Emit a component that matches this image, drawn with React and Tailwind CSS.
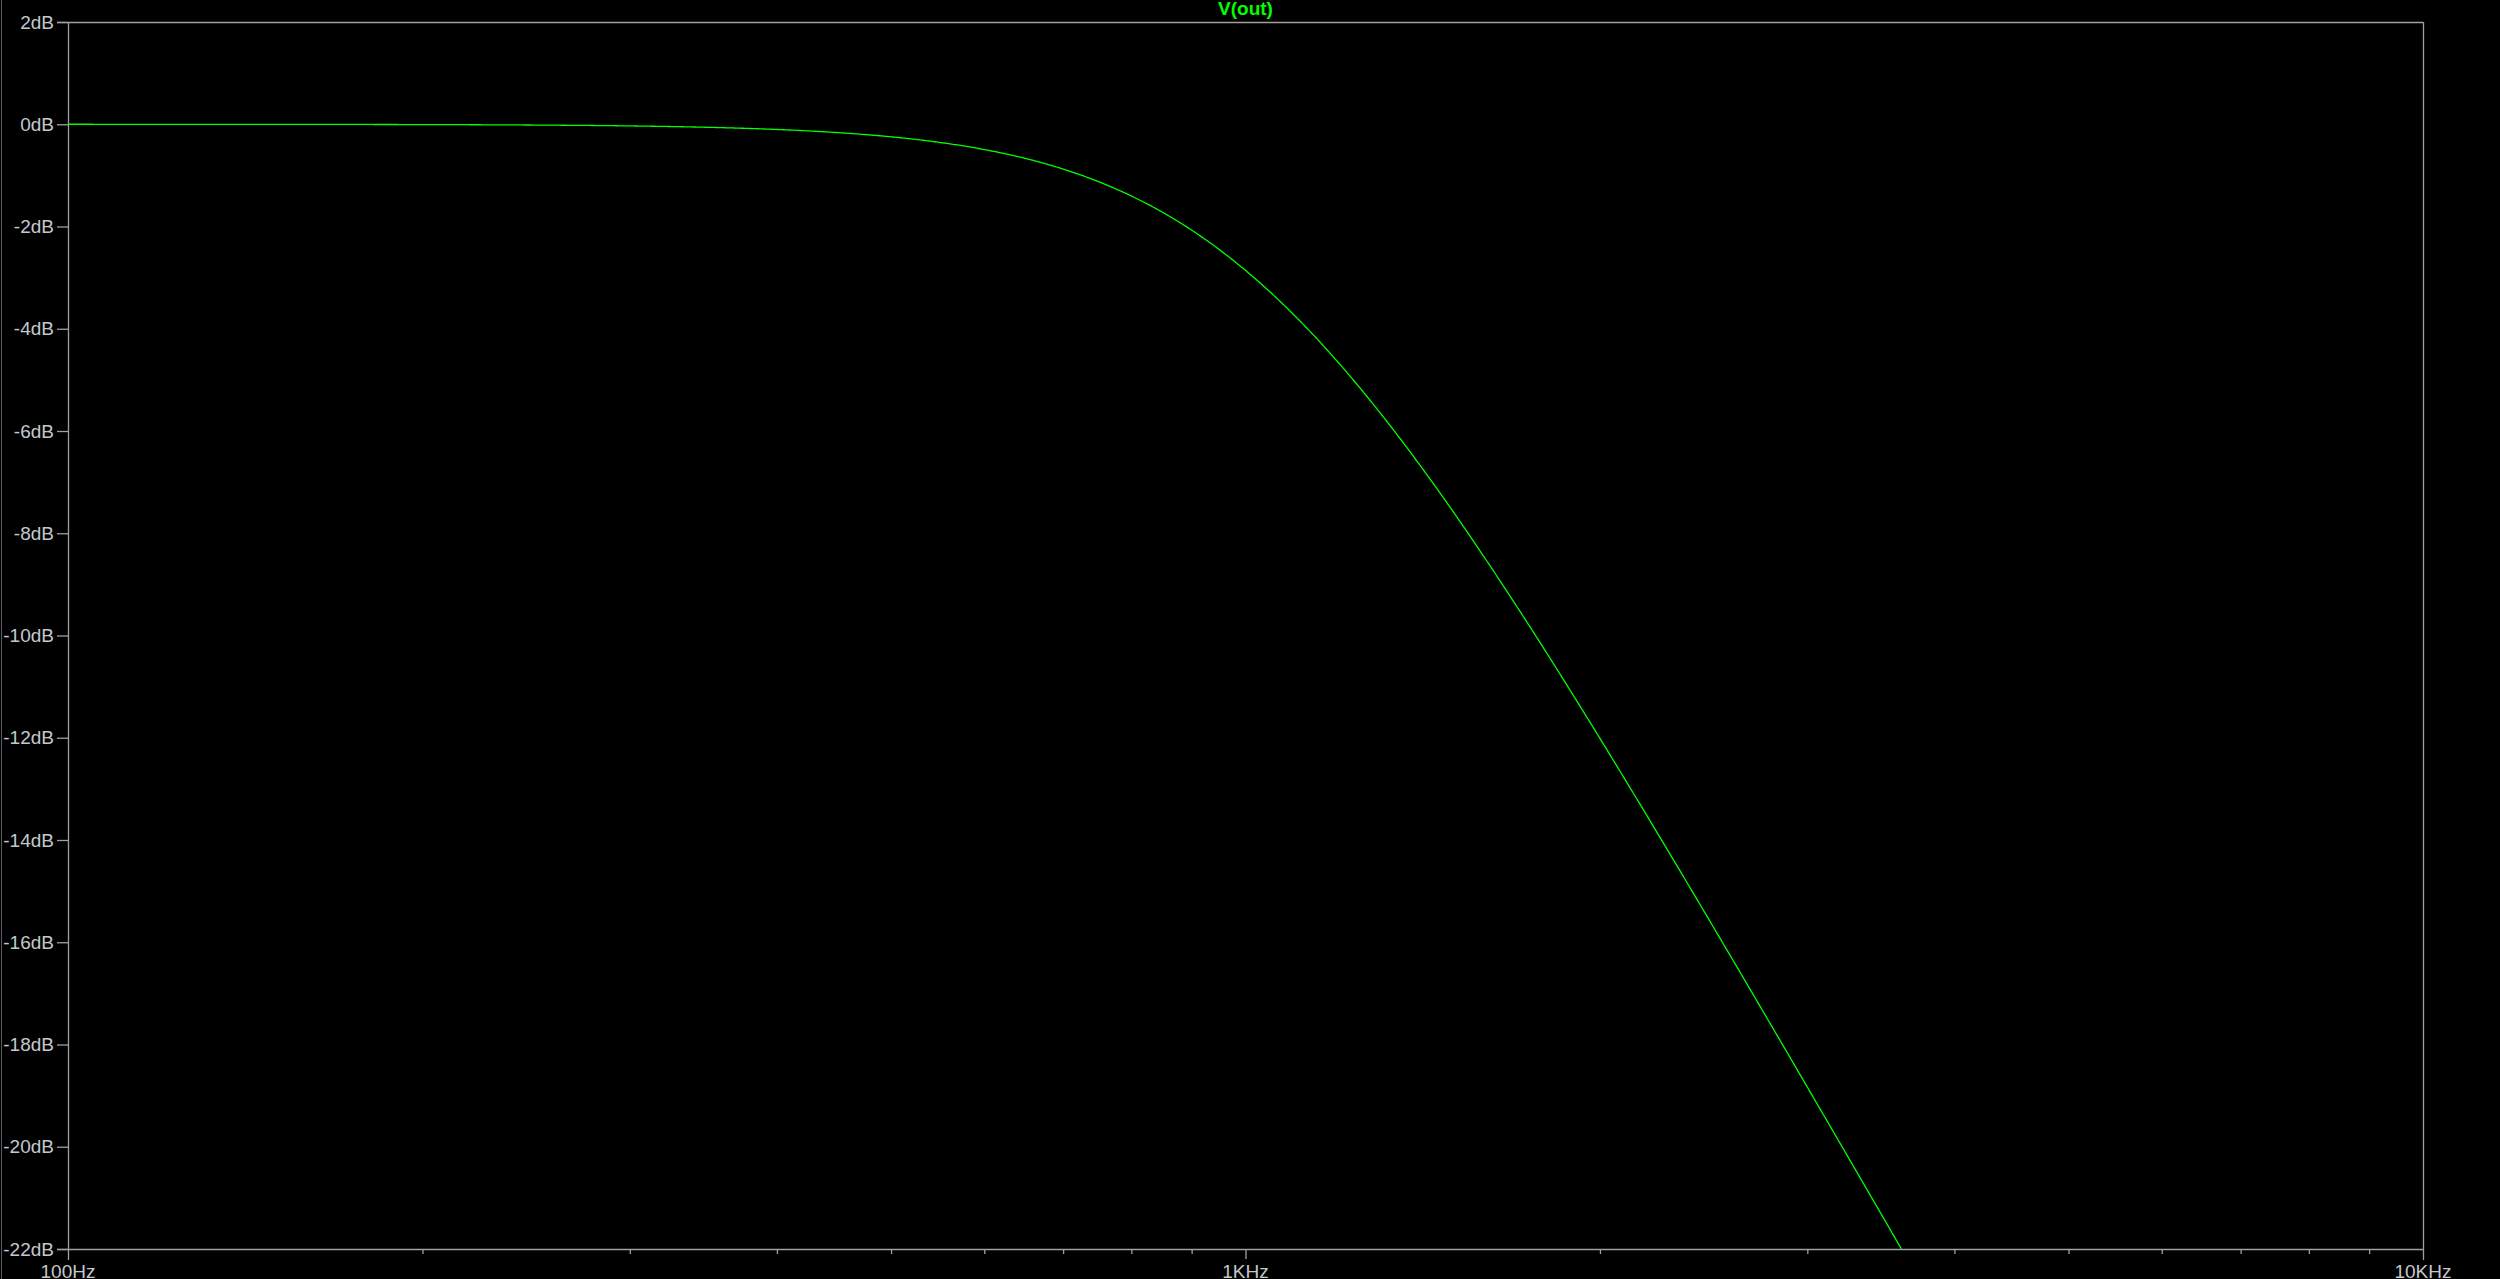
const FONT = '"Liberation Sans", Arial, sans-serif';

// plot frame, in page pixels
const L = 68;
const R = 2423;
const T = 22;
const B = 1249;
const DECADE = (R - L) / 2;
const DB_TOP = 2;
const DB_BOTTOM = -22;
const PX_PER_DB = (B - T) / (DB_TOP - DB_BOTTOM);

const FC = 1018;

const xOf = (f) => L + DECADE * Math.log10(f / 100);
const yOf = (db) => T + (DB_TOP - db) * PX_PER_DB;

const gainDb = (f) => -10 * Math.log10(1 + Math.pow(f / FC, 4));

function curvePath() {
  const pts = [];
  for (let x = L; x <= R; x += 1.5) {
    const f = 100 * Math.pow(10, (x - L) / DECADE);
    const db = gainDb(f);
    if (db < DB_BOTTOM) {
      // find the crossing by bisection so the trace ends on the frame
      let lo = x - 1.5;
      let hi = x;
      for (let i = 0; i < 30; i++) {
        const mid = (lo + hi) / 2;
        const fm = 100 * Math.pow(10, (mid - L) / DECADE);
        if (gainDb(fm) < DB_BOTTOM) hi = mid;
        else lo = mid;
      }
      pts.push([lo, B]);
      break;
    }
    pts.push([x, yOf(db)]);
  }
  return pts.map((p, i) => `${i ? 'L' : 'M'}${p[0].toFixed(2)} ${p[1].toFixed(2)}`).join(' ');
}

const DB_LABELS = [];
for (let db = DB_TOP; db >= DB_BOTTOM; db -= 2) DB_LABELS.push(db);

const MINOR = [];
[100, 1000].forEach((base) => {
  for (let n = 2; n <= 9; n++) MINOR.push(base * n);
});

const FREQ_LABELS = [
  { f: 100, text: '100Hz' },
  { f: 1000, text: '1KHz' },
  { f: 10000, text: '10KHz' },
];

function BodePlot() {
  const grid = '#a0a0a0';
  const label = '#c4c8cc';

  return (
    <svg width="2498" height="1279" viewBox="2 0 2498 1279" className="block shrink-0">
      <text
        x={(L + R) / 2}
        y="15"
        textAnchor="middle"
        fill="#00ff00"
        fontFamily={FONT}
        fontWeight="bold"
        fontSize="19"
      >
        V(out)
      </text>

      {/* frame */}
      <line x1={L - 11} y1={T + 0.5} x2={R} y2={T + 0.5} stroke={grid} strokeWidth="1.3" />
      <line x1={L - 11} y1={B + 0.5} x2={R} y2={B + 0.5} stroke={grid} strokeWidth="1.3" />
      <line x1={L + 0.5} y1={T} x2={L + 0.5} y2={B + 11} stroke={grid} strokeWidth="1.3" />
      <line x1={R + 0.5} y1={T} x2={R + 0.5} y2={B + 11} stroke={grid} strokeWidth="1.3" />

      {DB_LABELS.map((db) => (
        <g key={db}>
          <line x1={L - 11} y1={yOf(db) + 0.5} x2={L} y2={yOf(db) + 0.5} stroke={grid} strokeWidth="1.3" />
          <text
            x="54"
            y={yOf(db) + 6.5}
            textAnchor="end"
            fill={label}
            fontFamily={FONT}
            fontSize="19"
          >
            {db}dB
          </text>
        </g>
      ))}

      {MINOR.map((f) => (
        <line key={f} x1={xOf(f) + 0.5} y1={B} x2={xOf(f) + 0.5} y2={B + 5} stroke={grid} strokeWidth="1.3" />
      ))}
      <line x1={xOf(1000) + 0.5} y1={B} x2={xOf(1000) + 0.5} y2={B + 10} stroke={grid} strokeWidth="1.3" />

      {FREQ_LABELS.map((l) => (
        <text
          key={l.f}
          x={xOf(l.f)}
          y="1278"
          textAnchor="middle"
          fill={label}
          fontFamily={FONT}
          fontSize="19"
        >
          {l.text}
        </text>
      ))}

      <path d={curvePath()} fill="none" stroke="#00ff00" strokeWidth="1.3" />
    </svg>
  );
}

export default function App() {
  return (
    <div className="flex h-[1279px] w-[2500px] overflow-hidden bg-black">
      <div className="w-px shrink-0" />
      <div className="w-px shrink-0 bg-[#5c5c5c]" />
      <BodePlot />
    </div>
  );
}
